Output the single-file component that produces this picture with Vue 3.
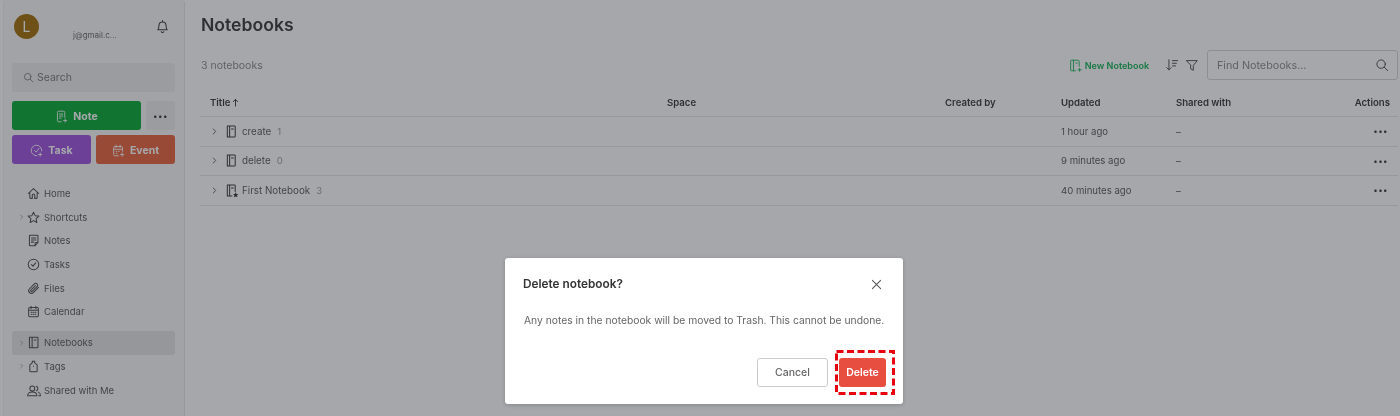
<template>
  <div class="app">
    <aside class="sidebar">
      <div class="account">
        <div class="avatar">L</div>
        <div class="email">j@gmail.c...</div>
        <svg class="bell" viewBox="0 0 16 16"><path d="M3 11.500c1-1 1.200-2 1.200-4.200C4.200 5 5.800 3.200 8 3.200s3.800 1.800 3.800 4.100c0 2.200.2 3.200 1.200 4.200zM8 1.600v1.600M6.600 13.500c.3.700.8 1 1.400 1s1.100-.3 1.400-1"/></svg>
      </div>
      <div class="search">
        <svg viewBox="0 0 14 14"><circle cx="6" cy="6" r="4.200"/><path d="M9.200 9.200l3.300 3.300"/></svg>
        <span>Search</span>
      </div>
      <div class="actions-row">
        <button class="btn note">
          <svg viewBox="0 0 16 16"><path d="M7.500 14.500H4.500A1.500 1.500 0 0 1 3 13V3A1.500 1.500 0 0 1 4.500 1.500h6A1.500 1.500 0 0 1 12 3v6M5.500 5h4M5.500 7.500h4M5.500 10h2M12.500 11v4M10.500 13h4"/></svg>
          Note
        </button>
        <button class="more">•••</button>
      </div>
      <div class="actions-row even">
        <button class="btn task">
          <svg viewBox="0 0 16 16"><path d="M8.500 14.500A6.500 6.500 0 1 1 14.500 8.500M5.500 8l2 2 3.500-4.500M12.500 11v4M10.500 13h4"/></svg>
          Task
        </button>
        <button class="btn event">
          <svg viewBox="0 0 16 16"><path d="M8 14.500H3.500A1.500 1.500 0 0 1 2 13V4.500A1.500 1.500 0 0 1 3.500 3h8A1.500 1.500 0 0 1 13 4.500V9M2 6.500h11M5 1.500v3M10 1.500v3M5 9h1M8 9h1M5 11.500h1M12.500 11v4M10.500 13h4"/></svg>
          Event
        </button>
      </div>
      <nav class="nav first">
        <a v-for="item in navTop" :key="item.label" class="nav-item">
          <span class="caret"><svg v-if="item.caret" viewBox="0 0 6 8"><path d="M2 1.500L4.500 4 2 6.500"/></svg></span>
          <svg class="nav-icon" viewBox="0 0 16 16"><path :d="item.d"/></svg>
          <span>{{ item.label }}</span>
        </a>
      </nav>
      <nav class="nav second">
        <a v-for="item in navBottom" :key="item.label" class="nav-item" :class="{ active: item.active }">
          <span class="caret"><svg v-if="item.caret" viewBox="0 0 6 8"><path d="M2 1.500L4.500 4 2 6.500"/></svg></span>
          <svg class="nav-icon" viewBox="0 0 16 16"><path :d="item.d"/></svg>
          <span>{{ item.label }}</span>
        </a>
      </nav>
    </aside>

    <main class="main">
      <h1>Notebooks</h1>
      <div class="toolbar">
        <span class="count">3 notebooks</span>
        <button class="new-notebook">
          <svg viewBox="0 0 16 16"><path d="M8 14.500H3A1 1 0 0 1 2 13.500v-11A1 1 0 0 1 3 1.500h8A1.500 1.500 0 0 1 12.500 3v6M5.500 1.500v13M8.500 5h1.500M13 11.500v3.500M11 13.300h4"/></svg>
          New Notebook
        </button>
        <svg class="tool-icon sort" viewBox="0 0 16 16"><path d="M4.500 2v11.500M2 11l2.500 2.500L7 11M8.500 3h6M8.500 6h4.500M8.500 9H12"/></svg>
        <svg class="tool-icon filter" viewBox="0 0 16 16"><path d="M2 3h12L9.500 8.500V14l-3-1.500v-4z"/></svg>
        <div class="find">
          <span>Find Notebooks...</span>
          <svg viewBox="0 0 16 16"><circle cx="7" cy="7" r="4.800"/><path d="M10.500 10.500L14.500 14.500"/></svg>
        </div>
      </div>

      <div class="table">
        <div class="row head">
          <div class="title-head">Title <svg viewBox="0 0 8 10"><path d="M4 9V1.500M1.500 4L4 1.500 6.500 4"/></svg></div>
          <div>Space</div>
          <div>Created by</div>
          <div>Updated</div>
          <div>Shared with</div>
          <div class="right">Actions</div>
        </div>
        <div v-for="nb in notebooks" :key="nb.name" class="row">
          <div class="name-cell">
            <svg class="row-caret" viewBox="0 0 6 8"><path d="M1.500 1L4.500 4 1.500 7"/></svg>
            <svg v-if="!nb.star" class="book" viewBox="0 0 14 14">
              <path d="M2.500 1h7.500a1 1 0 0 1 1 1v10a1 1 0 0 1-1 1H2.500zM5 1v12M7 4.200h2"/>
            </svg>
            <svg v-else class="book" viewBox="0 0 14 14">
              <path d="M7.500 13H2.500V1h7.500a1 1 0 0 1 1 1v6M5 1v12M7 4.200h2"/>
              <path class="star" d="M11.500 9l.9 1.800 1.900.3-1.400 1.300.4 1.900-1.800-.9-1.800.9.400-1.900-1.400-1.300 1.900-.3z"/>
            </svg>
            <span class="nb-name">{{ nb.name }}</span>
            <span class="nb-count">{{ nb.count }}</span>
          </div>
          <div></div>
          <div></div>
          <div>{{ nb.updated }}</div>
          <div>–</div>
          <div class="right dots">•••</div>
        </div>
      </div>
    </main>

    <div class="scrim"></div>

    <div class="dialog">
      <div class="dialog-head">
        <h2>Delete notebook?</h2>
        <svg viewBox="0 0 12 12"><path d="M1.500 1.500l9 9M10.500 1.500l-9 9"/></svg>
      </div>
      <p>Any notes in the notebook will be moved to Trash. This cannot be undone.</p>
      <div class="dialog-foot">
        <button class="cancel">Cancel</button>
        <div class="callout">
          <button class="delete">Delete</button>
          <svg class="dashes" viewBox="0 0 60 45"><rect x="1.500" y="1.500" width="57" height="42"/></svg>
        </div>
      </div>
    </div>
  </div>
</template>

<script setup>
const navTop = [
  { label: 'Home', d: 'M1.500 8L8 2l6.500 6M3.500 6.500V13a1 1 0 0 0 1 1h2V10a1.500 1.500 0 0 1 3 0v4h2a1 1 0 0 0 1-1V6.500' },
  { label: 'Shortcuts', caret: true, d: 'M8 1.500l2 4.200 4.600.6-3.400 3.200.9 4.600L8 11.800l-4.100 2.300.9-4.600L1.400 6.300 6 5.700z' },
  { label: 'Notes', d: 'M4 1.500h8.500a1 1 0 0 1 1 1v8L10 14.500H4a1 1 0 0 1-1-1v-11a1 1 0 0 1 1-1zM5.500 5h5.500M5.500 7.500h5.500M5.500 10h2.500M10 14.500v-3a1 1 0 0 1 1-1h2.500' },
  { label: 'Tasks', d: 'M8 1.500a6.500 6.500 0 1 0 0 13A6.500 6.500 0 0 0 8 1.500zM5.300 8l2 2 3.400-4' },
  { label: 'Files', d: 'M14.200 6.500L7.800 13a3.300 3.300 0 0 1-4.700-4.700l6-6a2.300 2.300 0 0 1 3.300 3.300l-6 6a1.100 1.100 0 0 1-1.600-1.600l5.500-5.500' },
  { label: 'Calendar', d: 'M3.500 3h9A1.500 1.500 0 0 1 14 4.500v8.500a1.500 1.500 0 0 1-1.500 1.500h-9A1.500 1.500 0 0 1 2 13V4.500A1.500 1.500 0 0 1 3.500 3zM2 6.500h12M5 1.500v3M11 1.500v3M5 9h1M7.500 9h1M10 9h1M5 11.500h1M7.500 11.500h1M10 11.500h1' }
]

const navBottom = [
  { label: 'Notebooks', caret: true, active: true, d: 'M3 1.500h9.500a1 1 0 0 1 1 1v11a1 1 0 0 1-1 1H3zM6.300 1.500v13M9 4.800h2' },
  { label: 'Tags', caret: true, d: 'M6.500 1.500h3v2l3 2.500v7.500a1 1 0 0 1-1 1H4.500a1 1 0 0 1-1-1V6l3-2.500zM8 7.500v.1' },
  { label: 'Shared with Me', d: 'M6.500 8.500a3 3 0 1 0 0-6 3 3 0 0 0 0 6zM.8 14.500c0-3.200 2.400-4.700 5.700-4.700s5.700 1.500 5.700 4.700zM11.500 2.700a3 3 0 0 1 0 5.600M14 10c1.500.5 2.600 2 2.600 4.500h-2' }
]

const notebooks = [
  { name: 'create', count: 1, updated: '1 hour ago' },
  { name: 'delete', count: 0, updated: '9 minutes ago' },
  { name: 'First Notebook', count: 3, updated: '40 minutes ago', star: true }
]
</script>

<style>
html, body {
  margin: 0;
  background: #fff;
}
</style>

<style scoped>
.app {
  position: relative;
  display: flex;
  width: 1400px;
  height: 416px;
  overflow: hidden;
  background: #fff;
  font-family: Inter, "Liberation Sans", sans-serif;
  color: #333;
  filter: blur(0.3px);
}

svg {
  fill: none;
  stroke: currentColor;
  stroke-width: 1.1;
  stroke-linecap: round;
  stroke-linejoin: round;
  flex: none;
}

button {
  font-family: inherit;
  border: none;
  cursor: pointer;
}

.sidebar {
  width: 182px;
  flex: none;
  margin-left: 3px;
  box-sizing: border-box;
  padding: 0 9px 0 8px;
  background: #f8f8f8;
  border-left: 1px solid #eeeeee;
  border-right: 1px solid #e6e6e6;
  border-radius: 4px 4px 0 0;
}

.account {
  display: flex;
  height: 63px;
}

.avatar {
  width: 25px;
  height: 25px;
  margin: 14px 0 0 2px;
  border-radius: 50%;
  background: #a26a00;
  color: #fff;
  font-size: 14px;
  line-height: 25px;
  text-align: center;
}

.email {
  margin: 30px 0 0 34px;
  font-size: 8px;
  color: #666;
}

.bell {
  width: 15px;
  height: 15px;
  margin: 19px 5px 0 auto;
  color: #333;
}

.search {
  display: flex;
  align-items: center;
  gap: 3px;
  height: 29px;
  padding-left: 11px;
  background: #ececec;
  border-radius: 3px;
  font-size: 10.500px;
  color: #777;
}

.search svg {
  width: 11px;
  height: 11px;
}

.actions-row {
  display: flex;
  gap: 5px;
  margin-top: 9px;
}

.actions-row.even {
  margin-top: 5px;
}

.btn {
  display: flex;
  align-items: center;
  justify-content: center;
  gap: 5px;
  height: 29px;
  padding: 1px 0 0;
  flex: 1;
  border-radius: 3px;
  color: #fff;
  font-size: 10.500px;
  font-weight: 700;
}

.btn svg {
  width: 13px;
  height: 13px;
}

.note {
  background: #00a82e;
}

.task {
  background: #9f4fdc;
}

.event {
  background: #e85f38;
}

.more {
  width: 29px;
  height: 29px;
  background: #ececec;
  border-radius: 3px;
  color: #333;
  font-size: 8px;
  letter-spacing: 0.5px;
  padding: 0;
}

.nav {
  display: flex;
  flex-direction: column;
}

.nav.first {
  margin-top: 18px;
}

.nav.second {
  margin-top: 7.500px;
}

.nav-item {
  display: flex;
  align-items: center;
  height: 23.600px;
  font-size: 9.500px;
  color: #555;
  border-radius: 3px;
}

.nav-item.active {
  background: #e4e4e4;
}

.caret {
  width: 15px;
  height: 6px;
  padding-left: 7px;
  box-sizing: border-box;
  flex: none;
  display: flex;
  color: #999;
}

.caret svg {
  width: 5px;
  height: 6px;
}

.nav-icon {
  width: 13px;
  height: 13px;
  margin-right: 4px;
  color: #444;
  stroke-width: 1.250;
  overflow: visible;
}

.main {
  flex: 1;
  min-width: 0;
  padding: 0 2px 0 15px;
}

h1 {
  margin: 14px 0 0 1px;
  font-size: 17.600px;
  line-height: 22px;
  font-weight: 600;
  color: #333;
}

.toolbar {
  display: flex;
  align-items: center;
  height: 30px;
  margin-top: 14px;
  padding-left: 1px;
}

.count {
  font-size: 10.500px;
  color: #888;
  margin-right: auto;
}

.new-notebook {
  display: flex;
  align-items: center;
  gap: 3px;
  padding: 0;
  background: none;
  color: #10b050;
  font-size: 9px;
  font-weight: 600;
}

.new-notebook svg {
  width: 13px;
  height: 13px;
}

.tool-icon {
  width: 14px;
  height: 14px;
  color: #444;
}

.sort {
  margin-left: 16px;
}

.filter {
  margin-left: 6px;
}

.find {
  display: flex;
  align-items: center;
  justify-content: space-between;
  box-sizing: border-box;
  width: 191px;
  height: 30px;
  margin-left: 8px;
  padding: 0 8px 0 9px;
  border: 1px solid #d4d4d4;
  border-radius: 3px;
  font-size: 10.750px;
  color: #888;
}

.find svg {
  width: 14px;
  height: 14px;
  color: #444;
}

.table {
  margin-top: 9px;
}

.row {
  display: grid;
  grid-template-columns: 457px 278px 116px 115px 1fr 80px;
  align-items: center;
  height: 29.500px;
  box-sizing: border-box;
  padding: 0 8px 0 10px;
  border-bottom: 1px solid #e6e6e6;
  font-size: 9.600px;
  color: #555;
}

.row.head {
  height: 28px;
  font-weight: 600;
  color: #333;
}

.title-head {
  display: flex;
  align-items: center;
  gap: 2px;
}

.title-head svg {
  width: 7px;
  height: 9px;
}

.right {
  text-align: right;
}

.dots {
  color: #333;
  font-size: 8px;
  letter-spacing: 0.4px;
  padding-right: 2px;
}

.name-cell {
  display: flex;
  align-items: center;
}

.row-caret {
  width: 5px;
  height: 7px;
  margin-left: 2px;
  color: #555;
}

.book {
  width: 13px;
  height: 13px;
  margin-left: 8px;
  margin-right: 4px;
  color: #333;
  overflow: visible;
}

.star {
  fill: currentColor;
  stroke: none;
}

.nb-name {
  font-size: 9.800px;
}

.nb-count {
  margin-left: 6px;
  color: #999;
}

.scrim {
  position: absolute;
  inset: 0;
  background: rgba(40, 45, 55, 0.42);
}

.dialog {
  position: absolute;
  left: 505px;
  top: 258px;
  width: 398px;
  height: 146px;
  box-sizing: border-box;
  padding: 0 18px;
  background: #fff;
  border-radius: 3px;
  box-shadow: 0 1px 4px rgba(0, 0, 0, 0.2);
}

.dialog-head {
  display: flex;
  align-items: center;
  justify-content: space-between;
  height: 52px;
  padding-right: 3px;
}

.dialog-head h2 {
  margin: 0;
  font-size: 11.800px;
  font-weight: 600;
  color: #333;
}

.dialog-head svg {
  width: 11px;
  height: 11px;
  color: #555;
}

p {
  margin: 3px 0 0 1px;
  font-size: 10.300px;
  line-height: 14px;
  color: #666;
  white-space: nowrap;
}

.dialog-foot {
  display: flex;
  justify-content: flex-end;
  align-items: center;
  margin-top: 31px;
}

.cancel {
  width: 71px;
  height: 29px;
  background: #fff;
  border: 1px solid #ccc;
  border-radius: 3px;
  font-size: 10.500px;
  font-weight: 500;
  color: #666;
  padding: 0;
}

.callout {
  position: relative;
  margin: 0 -1px 0 11px;
}

.dashes {
  position: absolute;
  left: -4px;
  top: -8px;
  width: 60px;
  height: 45px;
  color: #e8000f;
  stroke-width: 3;
  stroke-linecap: butt;
  stroke-linejoin: miter;
  stroke-dasharray: 7 3.500;
}

.delete {
  display: block;
  width: 47px;
  height: 29px;
  background: #e84e40;
  border-radius: 3px;
  color: #fff;
  font-size: 10.500px;
  font-weight: 600;
  padding: 0;
}
</style>
